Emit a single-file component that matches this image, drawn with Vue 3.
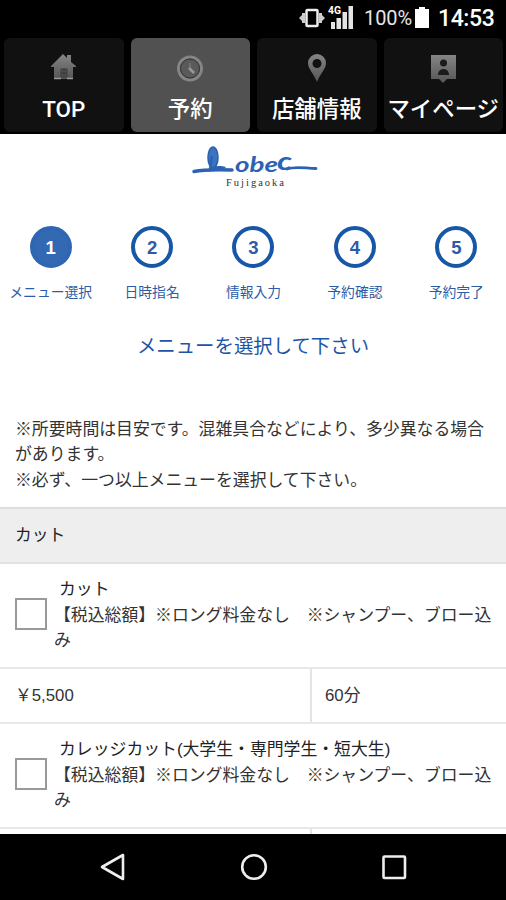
<script setup>
import { ref } from 'vue';

const tabs = [
  { id: 'top', label: 'TOP' },
  { id: 'reserve', label: '予約' },
  { id: 'shop', label: '店舗情報' },
  { id: 'mypage', label: 'マイページ' },
];
const activeTab = ref('reserve');

const steps = ['メニュー選択', '日時指名', '情報入力', '予約確認', '予約完了'];
const currentStep = ref(0);

const menus = ref([
  {
    name: 'カット',
    note: '【税込総額】※ロング料金なし　※シャンプー、ブロー込み',
    price: '￥5,500',
    time: '60分',
    checked: false,
  },
  {
    name: 'カレッジカット(大学生・専門学生・短大生)',
    note: '【税込総額】※ロング料金なし　※シャンプー、ブロー込み',
    price: '',
    time: '',
    checked: false,
  },
]);
</script>

<template>
  <div class="screen">
    <header class="status-bar">
      <svg class="vibrate" width="26" height="20" viewBox="0 0 26 20">
        <path d="M0 10l3-3v6zM3 5h3v10H3zM26 10l-3-3v6zM20 5h3v10h-3z" fill="#ccc" />
        <rect x="7.500" y="2" width="11" height="16" rx="1" fill="none" stroke="#eee" stroke-width="2.500" />
      </svg>
      <svg class="signal" width="26" height="26" viewBox="0 0 26 26">
        <path d="M3 18h4v7H3zM8.500 14h4.500v11H8.500zM14.500 8H19v17h-4.500zM20.500 2H25v23h-4.500z" fill="#e4e4e4" />
        <text x="0" y="10" font-size="10.5" textLength="13" lengthAdjust="spacingAndGlyphs">4G</text>
      </svg>
      <span class="percent">100%</span>
      <svg class="battery" width="14" height="21" viewBox="0 0 14 21">
        <path d="M4 0h6v2h4v19H0V2h4z" fill="#fff" />
      </svg>
      <span class="clock">14:53</span>
    </header>

    <nav class="tabs">
      <button
        v-for="tab in tabs"
        :key="tab.id"
        class="tab"
        :class="{ active: activeTab === tab.id }"
        @click="activeTab = tab.id"
      >
        <svg width="32" height="32" viewBox="0 0 32 32">
          <defs>
            <linearGradient :id="'shade-' + tab.id" x1="0" y1="0" x2="0" y2="1">
              <stop offset="0" stop-color="#858585" />
              <stop offset="1" stop-color="#555" />
            </linearGradient>
          </defs>
          <g v-if="tab.id === 'top'">
            <path d="M3 15L15 3l4 4V4h4v7l5 4v1h-3v12H6V16H3z" :fill="'url(#shade-' + tab.id + ')'" />
            <path d="M13 18h6v8h-6zM16 18v8M13 22h6" fill="#505050" stroke="#3a3a3a" />
            <path d="M6 27.5h7M19 27.5h6" stroke="#999" stroke-width="1.5" />
          </g>
          <g v-else-if="tab.id === 'reserve'">
            <circle cx="16" cy="17.500" r="11.500" fill="#4c4c4c" stroke="#858585" stroke-width="3" />
            <circle cx="16" cy="17.500" r="9.500" fill="#5a5a5a" stroke="#353535" stroke-width="1" />
            <path d="M16 12v6" fill="none" stroke="#777" stroke-width="1.500" />
            <path d="M15 17l5 5" fill="none" stroke="#999" stroke-width="2.500" />
          </g>
          <g v-else-if="tab.id === 'shop'">
            <path
              d="M16 3a9 9 0 0 0-9 9c0 6 6 11 9 19 3-8 9-13 9-19a9 9 0 0 0-9-9zm0 5a4.500 4.500 0 1 1 0 9 4.500 4.500 0 0 1 0-9z"
              :fill="'url(#shade-' + tab.id + ')'"
              fill-rule="evenodd"
            />
          </g>
          <g v-else>
            <path d="M4 4h25v24h-9l-4 4-4-4H4z" :fill="'url(#shade-' + tab.id + ')'" />
            <circle cx="16.500" cy="12" r="3.500" fill="#1b1b1b" />
            <path d="M11 24c0-8 11-8 11 0z" fill="#1b1b1b" />
          </g>
        </svg>
        <span>{{ tab.label }}</span>
      </button>
    </nav>

    <main class="page">
      <div class="logo">
        <svg width="130" height="46" viewBox="0 0 130 46">
          <!-- brush strokes around the name -->
          <ellipse cx="22" cy="13.500" rx="5" ry="10.500" fill="#3f73bf" stroke="#285fb1" stroke-width="1.500" />
          <path d="M3 27.500c10-2 24-2 38-1.500" fill="none" stroke="#2b62b4" stroke-width="3.500" stroke-linecap="round" />
          <path d="M18 24c5-2 10-3 17-1l-3 3H18z" fill="#2b62b4" />
          <path d="M96 25c8-3 16-1 29-.500" fill="none" stroke="#2b62b4" stroke-width="2.800" stroke-linecap="round" />
          <text class="logo-name" x="17" y="26" font-size="19">L</text>
          <text class="logo-name" x="44" y="28" font-size="21" textLength="43" lengthAdjust="spacingAndGlyphs">obe</text>
          <text class="logo-name" x="86" y="26" font-size="25" textLength="15" lengthAdjust="spacingAndGlyphs">c</text>
          <text class="logo-place" x="35" y="41.500" font-size="10.500" textLength="58">Fujigaoka</text>
        </svg>
      </div>

      <ol class="steps">
        <li v-for="(step, i) in steps" :key="step" :class="{ current: i === currentStep }">
          <span class="num">{{ i + 1 }}</span>
          <span class="step-label">{{ step }}</span>
        </li>
      </ol>

      <h1>メニューを選択して下さい</h1>

      <p class="notice">
        ※所要時間は目安です。混雑具合などにより、多少異なる場合があります。<br>※必ず、一つ以上メニューを選択して下さい。
      </p>

      <h2>カット</h2>
      <section v-for="menu in menus" :key="menu.name" class="menu">
        <label class="menu-row">
          <input v-model="menu.checked" type="checkbox">
          <span class="menu-text">
            <span class="menu-name">{{ menu.name }}</span>
            <span class="menu-note">{{ menu.note }}</span>
          </span>
        </label>
        <div class="menu-info">
          <span class="price">{{ menu.price }}</span>
          <span class="time">{{ menu.time }}</span>
        </div>
      </section>
    </main>

    <footer class="nav-bar">
      <svg width="28" height="28" viewBox="0 0 28 28">
        <path d="M24 2v24L3 14z" />
      </svg>
      <svg width="28" height="28" viewBox="0 0 28 28">
        <circle cx="14" cy="14" r="11.800" />
      </svg>
      <svg width="28" height="28" viewBox="0 0 28 28">
        <rect x="3.500" y="3.500" width="21.500" height="21.500" rx="1" />
      </svg>
    </footer>
  </div>
</template>

<style>
body {
  margin: 0;
  background: #000;
}
</style>

<style scoped>
.screen {
  width: 506px;
  height: 900px;
  display: flex;
  flex-direction: column;
  overflow: hidden;
  background: #000;
  color: #333;
  font-family: 'Liberation Sans', 'Noto Sans CJK JP', sans-serif;
}

.status-bar {
  flex: none;
  height: 38px;
  box-sizing: border-box;
  padding: 0 11px 2px 0;
  display: flex;
  align-items: center;
  justify-content: flex-end;
  color: #fff;
  font-family: Roboto, sans-serif;
}

.vibrate {
  margin-right: 3px;
}

.signal {
  margin: 0 10px 3px 0;
}

.signal text {
  fill: #fff;
  stroke: #000;
  stroke-width: 1.5px;
  paint-order: stroke;
  font-weight: 700;
}

.percent {
  width: 50px;
  font-size: 20px;
  letter-spacing: -0.1px;
  white-space: nowrap;
  color: #e6e6e6;
}

.battery {
  margin: 0 9px 2px 1px;
}

.clock {
  width: 57px;
  font-size: 23px;
  font-weight: 500;
  letter-spacing: -0.4px;
}

.tabs {
  flex: none;
  height: 96px;
  box-sizing: border-box;
  padding: 0 3px 2px 4px;
  display: grid;
  grid-template-columns: repeat(4, 1fr);
  gap: 7px;
}

.tab {
  min-width: 0;
  padding: 13px 0 0;
  border: 0;
  border-radius: 6px;
  background: #111;
  color: #fff;
  font-family: Roboto, 'Noto Sans CJK JP', sans-serif;
  font-size: 22.4px;
  font-weight: 500;
  line-height: 30px;
  white-space: nowrap;
  display: flex;
  flex-direction: column;
  align-items: center;
  gap: 11px;
}

.tab.active {
  background: #515151;
}

.tab svg {
  flex: none;
}

.page {
  flex: none;
  height: 700px;
  overflow: hidden;
  background: #fff;
}

.logo {
  height: 92px;
  box-sizing: border-box;
  padding: 10px 0 0 191px;
}

.logo-name {
  fill: #2b62b4;
  font-family: Lato, sans-serif;
  font-style: italic;
  font-weight: 700;
}

.logo-place {
  fill: #333;
  font-family: 'Liberation Serif', serif;
}

.steps {
  height: 103px;
  margin: 0 -1px 0 0;
  padding: 0;
  list-style: none;
  display: grid;
  grid-template-columns: repeat(5, 1fr);
}

.steps li {
  display: flex;
  flex-direction: column;
  align-items: center;
  color: #2c5ca8;
}

.num {
  width: 42px;
  height: 42px;
  box-sizing: border-box;
  border: 4px solid #1657a8;
  border-radius: 50%;
  color: #2c5ca8;
  font-size: 18.500px;
  font-weight: 700;
  line-height: 35px;
  text-align: center;
}

.current .num {
  border-color: #2f66b3;
  background: #3368b2;
  color: #fff;
}

.step-label {
  margin-top: 15px;
  font-size: 13.8px;
  line-height: 20px;
  white-space: nowrap;
}

h1 {
  margin: 0;
  color: #1d55a6;
  font-size: 19.4px;
  font-weight: 400;
  line-height: 34px;
  text-align: center;
}

.notice {
  margin: 54px 15px 14px;
  font-size: 16.85px;
  line-height: 25.3px;
}

h2 {
  height: 57px;
  margin: 0;
  box-sizing: border-box;
  padding-left: 15px;
  border-top: 2px solid #dedede;
  border-bottom: 2px solid #e2e2e2;
  background: #eee;
  color: #222;
  font-size: 16.8px;
  font-weight: 400;
  line-height: 53px;
}

.menu-row {
  height: 103px;
  box-sizing: border-box;
  padding: 0 11px 1px 15px;
  display: flex;
  align-items: center;
}

.menu-row input {
  flex: none;
  appearance: none;
  width: 32px;
  height: 32px;
  margin: 0 0 1px;
  border: 2px solid #999;
  background: #fff;
}

.menu-text {
  margin-left: 7px;
  padding-top: 1px;
  font-size: 16.85px;
  line-height: 25.3px;
}

.menu-name {
  display: block;
  padding-left: 5px;
  color: #222;
}

.menu-note {
  display: block;
  width: 442px;
}

.menu-info {
  height: 57px;
  box-sizing: border-box;
  border-top: 2px solid #e8e8e8;
  border-bottom: 2px solid #e8e8e8;
  display: grid;
  grid-template-columns: 310px 1fr;
  font-size: 16.8px;
  line-height: 53px;
}

.price {
  padding-left: 15px;
}

.time {
  padding-left: 13px;
  border-left: 2px solid #e4e4e4;
}

.nav-bar {
  flex: none;
  height: 66px;
  box-sizing: border-box;
  padding: 0 98px 0 99px;
  display: flex;
  align-items: center;
  justify-content: space-between;
}

.nav-bar svg {
  fill: none;
  stroke: #eee;
  stroke-width: 2.6px;
  stroke-linejoin: round;
}
</style>
